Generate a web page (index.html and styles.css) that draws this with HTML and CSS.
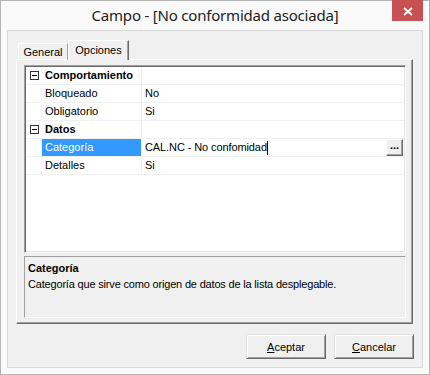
FILE: index.html
```html
<!DOCTYPE html>
<html lang="es">
<head>
    <meta charset="UTF-8">
    <title>Campo - [No conformidad asociada]</title>
    <link rel="stylesheet" href="styles.css">
</head>
<body>
    <div class="window">
        <div class="titlebar">
            <span class="title">Campo - [No conformidad asociada]</span>
            <div class="close">
                <svg width="31" height="21" viewBox="0 0 31 21">
                    <path d="M12 8 L20 15 M20 8 L12 15" stroke="#fff" stroke-width="1.8" fill="none"/>
                </svg>
            </div>
        </div>

        <div class="client">
            <!-- Tabs -->
            <div class="tabs">
                <div class="tab">General</div>
                <div class="tab active">Opciones</div>
            </div>

            <div class="tabpanel">
                <!-- Property grid -->
                <div class="grid">
                    <div class="row cat">
                        <span class="gutter"><i class="minus"></i></span>
                        <span class="name">Comportamiento</span>
                        <span class="value"></span>
                    </div>
                    <div class="row">
                        <span class="gutter"></span>
                        <span class="name">Bloqueado</span>
                        <span class="value">No</span>
                    </div>
                    <div class="row">
                        <span class="gutter"></span>
                        <span class="name">Obligatorio</span>
                        <span class="value">Si</span>
                    </div>
                    <div class="row cat">
                        <span class="gutter"><i class="minus"></i></span>
                        <span class="name">Datos</span>
                        <span class="value"></span>
                    </div>
                    <div class="row selected">
                        <span class="gutter"></span>
                        <span class="name">Categoría</span>
                        <span class="value">
                            <span class="edit">CAL.NC - No confomidad<i class="caret"></i></span>
                            <span class="dots">...</span>
                        </span>
                    </div>
                    <div class="row">
                        <span class="gutter"></span>
                        <span class="name">Detalles</span>
                        <span class="value">Si</span>
                    </div>
                </div>

                <!-- Description pane -->
                <div class="desc">
                    <b>Categoría</b>
                    <p>Categoría que sirve como origen de datos de la lista desplegable.</p>
                </div>
            </div>

            <div class="buttons">
                <button><u>A</u>ceptar</button>
                <button><u>C</u>ancelar</button>
            </div>
        </div>
    </div>
</body>
</html>
```

FILE: styles.css
```css
* {
    margin: 0;
    padding: 0;
    box-sizing: border-box;
}

body {
    font-family: "Liberation Sans", Arial, sans-serif;
    font-size: 11px;
    color: #000;
    background: #fff;
}

/* Window frame */
.window {
    position: relative;
    width: 430px;
    height: 375px;
    border: 1px solid #b4b4b4;
    background-color: #fafafa;
    padding: 0 6px 6px;
}

.titlebar {
    height: 29px;
    text-align: center;
}

.title {
    font-family: "Noto Sans", "Open Sans", sans-serif;
    font-size: 15px;
    line-height: 29px;
    letter-spacing: -0.2px;
    color: #222;
}

.close {
    position: absolute;
    top: -1px;
    right: 6px;
    width: 31px;
    height: 21px;
    background-color: #c75050;
}

.close svg {
    display: block;
}

.client {
    height: 338px;
    border: 1px solid #d9d9d9;
    background-color: #f0f0f0;
    padding: 9px 8px 0;
}

/* Tabs */
.tabs {
    display: flex;
    height: 20px;
    padding-left: 2px;
    margin-bottom: -1px;
}

.tab {
    position: relative;
    height: 17px;
    width: 50px;
    margin-top: 3px;
    padding-top: 1px;
    border-top: 1px solid #fff;
    border-left: 1px solid #fff;
    border-right: 1px solid #a0a0a0;
    text-align: center;
    line-height: 15px;
}

.tab.active {
    z-index: 1;
    height: 20px;
    width: 61px;
    margin-top: 0;
    padding-top: 2px;
    background-color: #f0f0f0;
    border-right: 1px solid #696969;
    box-shadow: inset -1px 0 #a0a0a0;
}

.tabpanel {
    width: 397px;
    height: 265px;
    border-style: solid;
    border-width: 1px;
    border-color: #fff #696969 #696969 #fff;
    box-shadow: inset -1px -1px #a0a0a0;
    padding: 5px 6px 5px 7px;
}

/* Property grid */
.grid {
    height: 188px;
    border: 1px solid;
    border-color: #a0a0a0 #fff #fff #a0a0a0;
    box-shadow: inset 1px 1px #696969, inset -1px -1px #e3e3e3;
    padding: 1px;
    background-color: #fff;
}

.row {
    display: flex;
    height: 18px;
    border-bottom: 1px solid #f0f0f0;
    line-height: 17px;
}

.gutter {
    position: relative;
    width: 16px;
    border-right: 1px solid #f0f0f0;
}

.row.cat .gutter {
    border-right-color: #fff;
}

.name {
    width: 100px;
    padding-left: 3px;
    border-right: 1px solid #f0f0f0;
    white-space: nowrap;
}

.row.cat .name {
    font-weight: bold;
}

.row.selected .name {
    background-color: #3399ff;
    color: #fff;
}

.value {
    flex: 1;
    display: flex;
    padding-left: 3px;
}

.edit {
    flex: 1;
    display: flex;
    align-items: center;
    letter-spacing: -0.1px;
}

.caret {
    width: 1px;
    height: 14px;
    background-color: #000;
}

.dots {
    width: 17px;
    height: 17px;
    margin-right: 1px;
    border: 1px solid;
    border-color: #fff #696969 #696969 #fff;
    box-shadow: inset -1px -1px #a0a0a0;
    background-color: #f0f0f0;
    font-weight: bold;
    text-align: center;
    line-height: 11px;
}

.minus {
    position: absolute;
    left: 4px;
    top: 4px;
    width: 9px;
    height: 9px;
    border: 1px solid #333;
    background-color: #fff;
}

.minus::after {
    content: "";
    position: absolute;
    left: 1px;
    top: 3px;
    width: 5px;
    height: 1px;
    background-color: #000;
}

/* Description pane */
.desc {
    height: 62px;
    margin-top: 3px;
    border: 1px solid;
    border-color: #a0a0a0 #fff #fff #a0a0a0;
    padding: 3px 3px 0;
    line-height: 16px;
}

.desc b {
    display: block;
}

.desc p {
    letter-spacing: -0.18px;
}

/* Buttons */
.buttons {
    display: flex;
    justify-content: flex-end;
    gap: 8px;
    margin-top: 10px;
}

button {
    width: 80px;
    height: 25px;
    font-family: "Liberation Sans", Arial, sans-serif;
    font-size: 11px;
    color: #000;
    background-color: #f0f0f0;
    border: 1px solid;
    border-color: #e3e3e3 #696969 #696969 #e3e3e3;
    box-shadow: inset 1px 1px #fff, inset -1px -1px #a0a0a0;
}
```
